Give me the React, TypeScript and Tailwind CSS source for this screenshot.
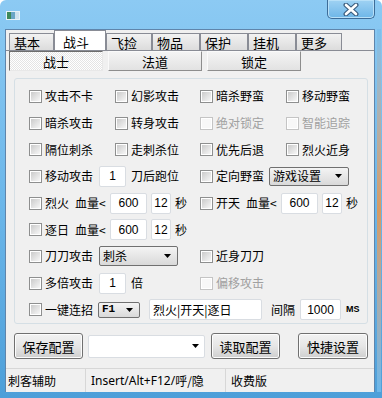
import type { ReactNode } from "react";

const cjk = "font-['Noto_Sans_CJK_SC',sans-serif]";

function Check({ label, disabled }: { label: string; disabled?: boolean }) {
  return (
    <span className="flex items-center gap-[3px]">
      <span
        className={`flex h-[13px] w-[13px] shrink-0 items-center justify-center border bg-white ${
          disabled ? "border-[#c4c4c4]" : "border-[#8e8f8f]"
        }`}
      >
        <span className={`h-[9px] w-[9px] ${disabled ? "bg-[#f7f7f7]" : "bg-gradient-to-br from-[#cbcbcb] to-[#f7f7f7]"}`} />
      </span>
      <span className={`whitespace-nowrap ${disabled ? "text-[#a0a0a0]" : "text-black"}`}>{label}</span>
    </span>
  );
}

function Field({ value, w, left }: { value: string; w: string; left?: boolean }) {
  return (
    <span
      className={`flex h-[21px] shrink-0 items-center rounded-[2px] border border-[#d9dde2] bg-white text-[12px] ${
        left ? "justify-start pl-[3px]" : "justify-center font-['Liberation_Sans',sans-serif]"
      } ${w}`}
    >
      {value}
    </span>
  );
}

function Arrow() {
  return (
    <svg width="7" height="4" viewBox="0 0 7 4" className="shrink-0">
      <path d="M0 0h7L3.5 4z" fill="#000" />
    </svg>
  );
}

function Combo({ text, w, h, mono }: { text: string; w: string; h: string; mono?: boolean }) {
  return (
    <span
      className={`flex shrink-0 items-center justify-between rounded-[2px] border border-[#707070] bg-gradient-to-b from-[#f4f4f4] to-[#d9d9d9] pl-[3px] pr-[6px] ${w} ${h}`}
    >
      <span className={mono ? "font-['Liberation_Mono',monospace] text-[11px] font-bold" : ""}>{text}</span>
      <Arrow />
    </span>
  );
}

function Button({ children, w }: { children: ReactNode; w: string }) {
  return (
    <span
      className={`flex h-[26px] shrink-0 items-center justify-center rounded-[3px] border border-[#707070] bg-gradient-to-b from-[#f2f2f2] via-[#e6e6e6] to-[#cfcfcf] text-[13px] shadow-[inset_0_0_0_1px_#fcfcfc] ${w}`}
    >
      {children}
    </span>
  );
}

function Row({ children }: { children: ReactNode }) {
  return <div className="flex h-[27px] items-center pl-[14px]">{children}</div>;
}

const tabs = [
  { name: "基本", w: "w-[45px]" },
  { name: "战斗", w: "w-[52px]", active: true },
  { name: "飞捡", w: "w-[46px]" },
  { name: "物品", w: "w-[48px]" },
  { name: "保护", w: "w-[48px]" },
  { name: "挂机", w: "w-[48px]" },
  { name: "更多", w: "w-[46px]" },
];

export default function App() {
  return (
    <div
      className={`flex h-[398px] w-[382px] flex-col overflow-hidden rounded-t-[6px] bg-gradient-to-b from-[#8ccaf3] via-[#6cb7ea] to-[#4d9fd9] text-[12px] leading-none ${cjk}`}
    >
      {/* title bar */}
      <div className="flex h-[29px] shrink-0 items-start">
        <div className="ml-[6px] mt-[11px] flex h-[9px] w-[14px] border border-[#e8f2f8] bg-[#cfe3ef]">
          <span className="h-full w-[4px] bg-[#3f8a5a]" />
          <span className="h-full w-[4px] bg-[#6aa6c6]" />
        </div>
        <div className="ml-auto mr-[7px] flex h-[19px] w-[48px] items-center justify-center rounded-b-[5px] border border-t-0 border-[#3d6c98] bg-gradient-to-b from-[#9fd2f3] to-[#6db6e8] shadow-[inset_0_0_0_1px_#b8e0f8]">
          <svg width="16" height="13" viewBox="0 0 16 13">
            <path d="M3 2l10 9M13 2L3 11" stroke="#3d5f80" strokeWidth="5" strokeLinecap="round" />
            <path d="M3 2l10 9M13 2L3 11" stroke="#fff" strokeWidth="2.6" strokeLinecap="round" />
          </svg>
        </div>
      </div>

      <div className="flex">
        {/* client area */}
        <div className="ml-[5px] flex h-[363px] w-[370px] flex-col border-x border-t border-[#5f85ab] bg-[#f0f0f0]">
          {/* tab strip */}
          <div className="flex h-[21px] items-end pl-[3px]">
            {tabs.map((t) =>
              t.active ? (
                <div
                  key={t.name}
                  className={`-mb-px flex h-[21px] items-center border border-b-0 border-[#898c95] bg-white pl-[8px] text-[13px] ${t.w}`}
                >
                  {t.name}
                </div>
              ) : (
                <div
                  key={t.name}
                  className={`flex h-[17px] items-center border border-b-0 border-[#898c95] bg-gradient-to-b from-[#f2f2f2] to-[#dcdcdc] pl-[4px] text-[13px] ${t.w}`}
                >
                  {t.name}
                </div>
              ),
            )}
          </div>

          {/* tab page */}
          <div className="flex flex-col border-t border-[#898c95]">
            <div className="flex h-[20px] gap-[5px] pl-[3px]">
              <div className="flex w-[94px] items-center justify-center border border-b-[#e8e8e8] border-l-[#6d6d6d] border-r-[#e8e8e8] border-t-[#6d6d6d] bg-[repeating-conic-gradient(#ffffff_0_25%,#e4e4e4_0_50%)] bg-[length:2px_2px] text-[13px]">
                战士
              </div>
              <div className="flex w-[94px] items-center justify-center border border-b-[#8d8d8d] border-l-[#fafafa] border-r-[#8d8d8d] border-t-[#fafafa] bg-gradient-to-b from-[#f4f4f4] to-[#e2e2e2] text-[13px]">
                法道
              </div>
              <div className="flex w-[94px] items-center justify-center border border-b-[#8d8d8d] border-l-[#fafafa] border-r-[#8d8d8d] border-t-[#fafafa] bg-gradient-to-b from-[#f4f4f4] to-[#e2e2e2] text-[13px]">
                锁定
              </div>
            </div>

            {/* group box */}
            <div className="ml-[8px] mt-[7px] flex h-[246px] w-[354px] flex-col rounded-[3px] border border-[#d5dfe5] pt-[4px] text-[12px]">
              <Row>
                <div className="w-[86px]"><Check label="攻击不卡" /></div>
                <div className="w-[85px]"><Check label="幻影攻击" /></div>
                <div className="w-[86px]"><Check label="暗杀野蛮" /></div>
                <div><Check label="移动野蛮" /></div>
              </Row>
              <Row>
                <div className="w-[86px]"><Check label="暗杀攻击" /></div>
                <div className="w-[85px]"><Check label="转身攻击" /></div>
                <div className="w-[86px]"><Check label="绝对锁定" disabled /></div>
                <div><Check label="智能追踪" disabled /></div>
              </Row>
              <Row>
                <div className="w-[86px]"><Check label="隔位刺杀" /></div>
                <div className="w-[85px]"><Check label="走刺杀位" /></div>
                <div className="w-[86px]"><Check label="优先后退" /></div>
                <div><Check label="烈火近身" /></div>
              </Row>
              <Row>
                <div className="flex w-[171px] items-center">
                  <div className="w-[70px]"><Check label="移动攻击" /></div>
                  <Field value="1" w="w-[27px]" />
                  <span className="ml-[5px]">刀后跑位</span>
                </div>
                <div className="flex items-center">
                  <div className="w-[69px]"><Check label="定向野蛮" /></div>
                  <Combo text="游戏设置" w="w-[80px]" h="h-[19px]" />
                </div>
              </Row>
              <Row>
                <div className="flex w-[171px] items-center">
                  <div className="w-[46px]"><Check label="烈火" /></div>
                  <span className="w-[35px]">血量&lt;</span>
                  <Field value="600" w="w-[37px]" />
                  <span className="ml-[4px]"><Field value="12" w="w-[20px]" /></span>
                  <span className="ml-[4px]">秒</span>
                </div>
                <div className="flex items-center">
                  <div className="w-[46px]"><Check label="开天" /></div>
                  <span className="w-[35px]">血量&lt;</span>
                  <Field value="600" w="w-[37px]" />
                  <span className="ml-[4px]"><Field value="12" w="w-[20px]" /></span>
                  <span className="ml-[4px]">秒</span>
                </div>
              </Row>
              <Row>
                <div className="flex w-[171px] items-center">
                  <div className="w-[46px]"><Check label="逐日" /></div>
                  <span className="w-[35px]">血量&lt;</span>
                  <Field value="600" w="w-[37px]" />
                  <span className="ml-[4px]"><Field value="12" w="w-[20px]" /></span>
                  <span className="ml-[4px]">秒</span>
                </div>
              </Row>
              <Row>
                <div className="flex w-[171px] items-center">
                  <div className="w-[70px]"><Check label="刀刀攻击" /></div>
                  <Combo text="刺杀" w="w-[79px]" h="h-[20px]" />
                </div>
                <div><Check label="近身刀刀" /></div>
              </Row>
              <Row>
                <div className="flex w-[171px] items-center">
                  <div className="w-[70px]"><Check label="多倍攻击" /></div>
                  <Field value="1" w="w-[27px]" />
                  <span className="ml-[5px]">倍</span>
                </div>
                <div><Check label="偏移攻击" disabled /></div>
              </Row>
              <Row>
                <div className="w-[69px]"><Check label="一键连招" /></div>
                <Combo text="F1" w="w-[42px]" h="h-[16px]" mono />
                <span className="ml-[9px]"><Field value="烈火|开天|逐日" w="w-[113px]" left /></span>
                <span className="ml-[9px]">间隔</span>
                <span className="ml-[5px]"><Field value="1000" w="w-[41px]" /></span>
                <span className="ml-[5px] font-['Liberation_Sans',sans-serif] text-[9px] font-bold">MS</span>
              </Row>
            </div>

            {/* buttons */}
            <div className="ml-[8px] mt-[9px] flex h-[26px] items-center">
              <Button w="w-[69px]">保存配置</Button>
              <span className="ml-[5px] flex h-[23px] w-[117px] items-center justify-end rounded-[2px] border border-[#d9dde2] bg-white pr-[5px]">
                <Arrow />
              </span>
              <span className="ml-[6px]"><Button w="w-[69px]">读取配置</Button></span>
              <span className="ml-[18px]"><Button w="w-[70px]">快捷设置</Button></span>
            </div>
          </div>

          {/* status bar */}
          <div className="mt-[9px] flex h-[25px] items-center border-t border-[#d7d7d7] text-[12px]">
            <span className="flex h-full w-[80px] items-center border-r border-[#d7d7d7] pl-[2px]">刺客辅助</span>
            <span className="flex h-full w-[140px] items-center border-r border-[#d7d7d7] pl-[5px]">
              <span className="font-['Noto_Sans',sans-serif]">Insert/Alt+F12/</span>呼/隐
            </span>
            <span className="pl-[5px]">收费版</span>
          </div>
        </div>

        {/* right frame showing through the glass */}
        <div className="ml-[2px] h-[363px] w-[4px] bg-gradient-to-b from-[#7cc0ee] via-[#d69a62] to-[#6cb7ea]" />
      </div>
    </div>
  );
}
